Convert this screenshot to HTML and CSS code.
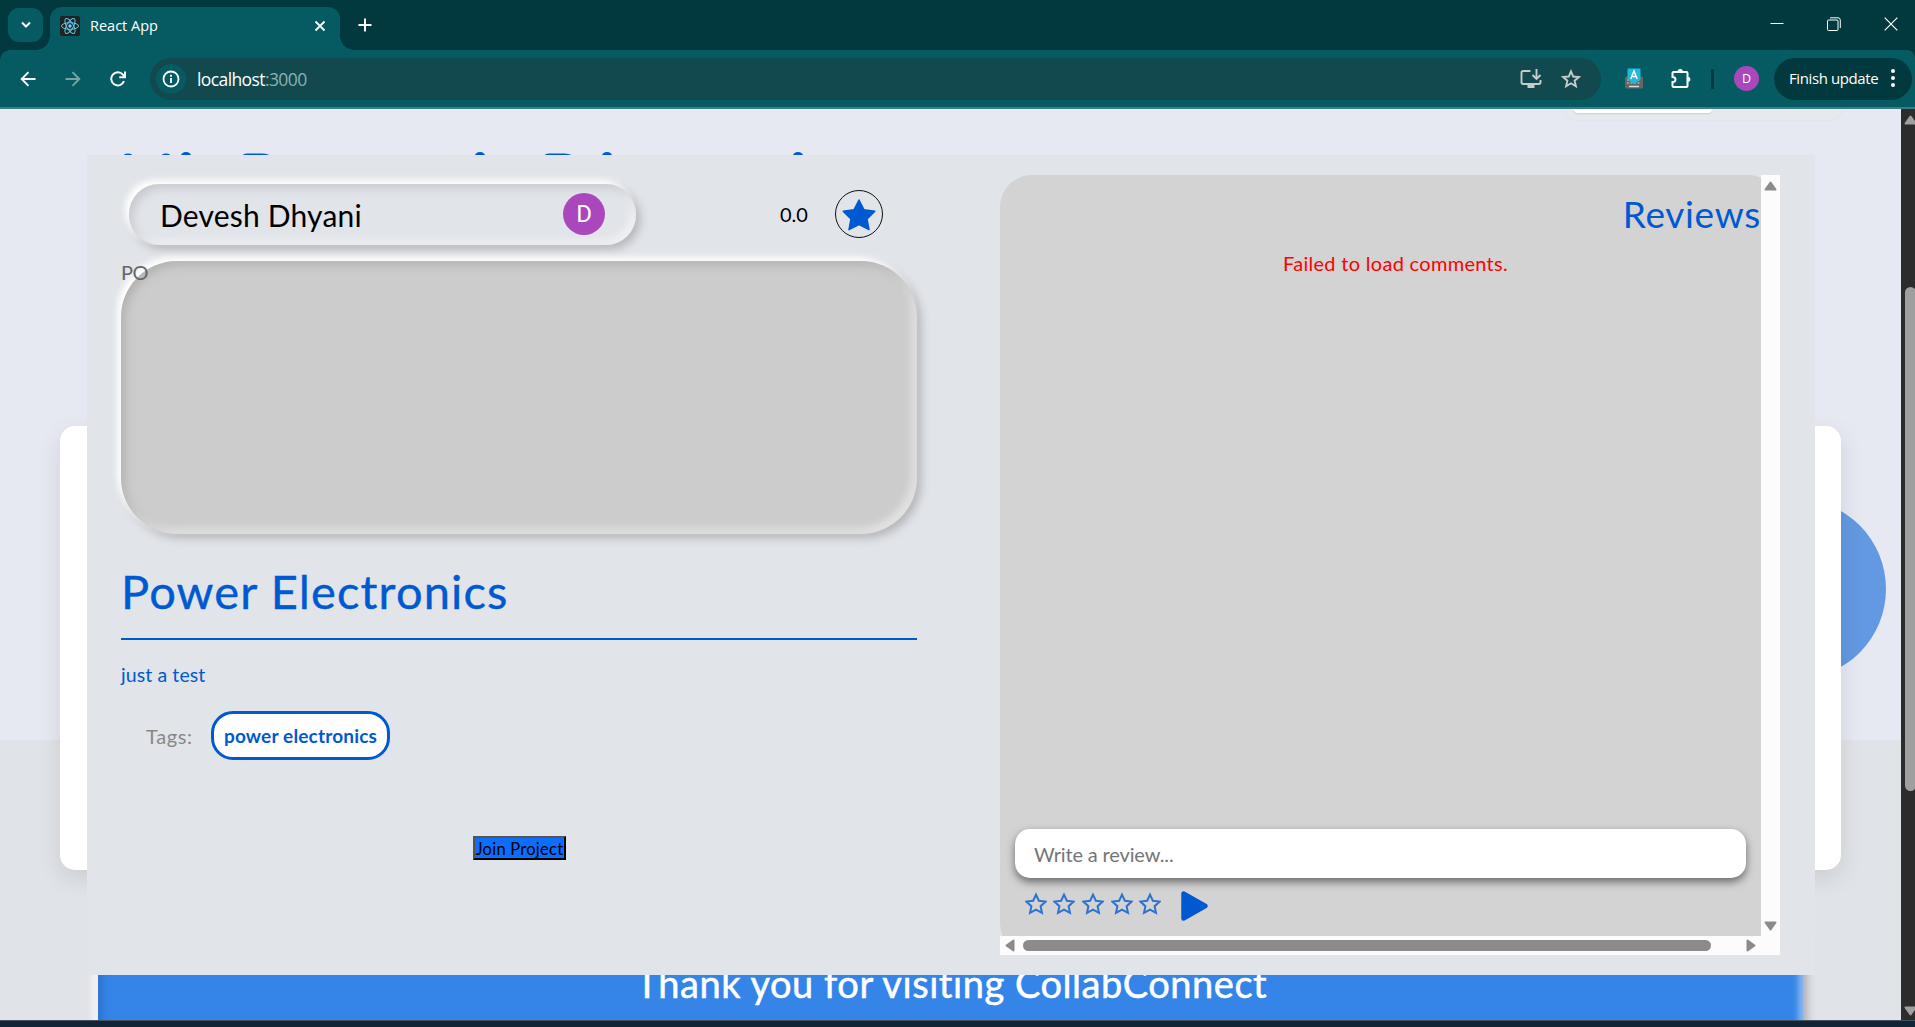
FILE: index.html
```html
<!DOCTYPE html>
<html lang="en">
<head>
<meta charset="utf-8">
<title>React App</title>
<link rel="stylesheet" href="styles.css">
</head>
<body>
<svg width="0" height="0" class="defs">
  <symbol id="star" viewBox="0 0 24 24"><path d="M12 1.800l3.100 6.700 7.300.9-5.400 5 1.500 7.300L12 18.100l-6.500 3.600L7 14.400l-5.400-5 7.300-.9z"/></symbol>
</svg>
<header class="tabstrip">
  <div class="tab-search"><svg width="12" height="8" viewBox="0 0 12 8"><path d="M2 1.500l4 4 4-4" fill="none" stroke="#fff" stroke-width="2"/></svg></div>
  <div class="tab">
    <svg class="favicon" width="20" height="20" viewBox="0 0 20 20"><rect width="20" height="20" rx="2" fill="#222"/><g fill="none" stroke="#61c9e8" stroke-width="1"><ellipse cx="10" cy="10" rx="8.500" ry="3.300"/><ellipse cx="10" cy="10" rx="8.500" ry="3.300" transform="rotate(60 10 10)"/><ellipse cx="10" cy="10" rx="8.500" ry="3.300" transform="rotate(120 10 10)"/></g><circle cx="10" cy="10" r="1.700" fill="#61dafb"/></svg>
    <span class="tab-title">React App</span>
    <svg width="12" height="12" viewBox="0 0 12 12"><path d="M1.500 1.500l9 9m0-9l-9 9" stroke="#fff" stroke-width="1.800"/></svg>
  </div>
  <svg class="new-tab" width="14" height="14" viewBox="0 0 14 14"><path d="M7 .5v13M.5 7h13" stroke="#fff" stroke-width="1.900"/></svg>
  <div class="window-buttons">
    <svg width="14" height="14" viewBox="0 0 14 14"><path d="M.5 6.500h13" stroke="#fff"/></svg>
    <svg width="14" height="14" viewBox="0 0 14 14" fill="none" stroke="#fff"><rect x=".5" y="3" width="10.500" height="10.500" rx="1"/><path d="M3 .8h8a2.300 2.300 0 0 1 2.300 2.300v8"/></svg>
    <svg width="14" height="14" viewBox="0 0 14 14"><path d="M.7.7l12.600 12.600m0-12.600L.7 13.300" stroke="#fff" stroke-width="1.200"/></svg>
  </div>
</header>
<nav class="toolbar">
  <svg class="nav-icon" width="16" height="16" viewBox="0 0 16 16" fill="none" stroke="#fff" stroke-width="1.900"><path d="M15.500 8H2M8.500 1.200L1.700 8l6.800 6.800"/></svg>
  <svg class="nav-icon dim" width="16" height="16" viewBox="0 0 16 16" fill="none" stroke="#fff" stroke-width="1.900"><path d="M.5 8H14M7.500 1.200L14.300 8l-6.800 6.800"/></svg>
  <svg class="nav-icon" width="16" height="16" viewBox="0 0 16 16" fill="none" stroke="#fff" stroke-width="2"><path d="M14 10.200A6.600 6.600 0 1 1 12.900 3.600L14.300 5.200"/><path d="M15 .5v5.700H9.300"/></svg>
  <div class="omnibox">
    <span class="site-info"><svg width="18" height="18" viewBox="0 0 18 18" fill="none" stroke="#fff" stroke-width="1.800"><circle cx="9" cy="9" r="7.500"/><path d="M9 8v5M9 4.800v1.900"/></svg></span>
    <span class="url">localhost<span class="port">:3000</span></span>
    <svg class="install" width="22" height="20" viewBox="0 0 22 20" fill="none" stroke="#c6cccd" stroke-width="1.900"><path d="M10.500 2H3.200Q1.500 2 1.500 3.700v9.600Q1.500 15 3.200 15h15.600q1.700 0 1.700-1.700V11"/><path d="M16.500 0v9.500M12.500 6l4 4 4-4"/><path d="M7.500 17.500h7" stroke-width="3"/></svg>
    <svg class="bookmark" width="20" height="20" viewBox="0 0 20 20"><path d="M10 2.300l2.200 5.200 5.700.5-4.300 3.700 1.300 5.600-4.900-3-4.900 3 1.300-5.600L2.100 8l5.700-.5z" fill="none" stroke="#c6cccd" stroke-width="1.900"/></svg>
  </div>
  <svg class="ext" width="20" height="21" viewBox="0 0 20 21"><rect x="1" y="8.500" width="18" height="12" rx="1" fill="#666"/><path d="M3 12h14M3 15h14" stroke="#aaa" stroke-width="1.600" stroke-dasharray="2 1.500"/><path d="M5 18.500h10" stroke="#ddd" stroke-width="1.400"/><path d="M3.500.5h13v11L10 16l-6.500-4.500z" fill="#1fb9dc"/><path d="M6.800 11L10 3l3.200 8M8 8.500h4" stroke="#fff" stroke-width="1.500" fill="none"/></svg>
  <svg class="puzzle" width="22" height="22" viewBox="0 0 22 22"><path d="M3.500 4h13q1 0 1 1v13q0 1-1 1h-13q-1 0-1-1v-4q3 0 3-2.500T2.500 9V5q0-1 1-1z" fill="none" stroke="#fff" stroke-width="2"/><path d="M7.500 4a2.700 3 0 0 1 5.400 0zM17.500 8.700a2.900 2.600 0 0 1 0 5.200z" fill="#fff"/></svg>
  <i class="divider"></i>
  <span class="profile">D</span>
  <div class="update"><span>Finish update</span><i class="dots"><b></b><b></b><b></b></i></div>
</nav>
<main class="viewport">
  <div class="scene">
    <div class="switch"><div class="switch-on"></div></div>
    <svg class="heading-tops" width="700" height="4" viewBox="0 0 700 4" fill="#0059d1"><ellipse cx="8" cy="4" rx="4.500" ry="2.500"/><ellipse cx="46" cy="4" rx="4.500" ry="2.500"/><ellipse cx="66" cy="5" rx="5.500" ry="5"/><path d="M122 4q1-2.500 5-2.500h15q6 0 9 2.500zM424 4q1-2.500 5-2.500h15q6 0 9 2.500z"/><ellipse cx="360" cy="5" rx="5.500" ry="5"/><ellipse cx="487" cy="5" rx="5.500" ry="5"/><ellipse cx="678" cy="5" rx="5.500" ry="5"/></svg>
    <div class="orb"></div>
    <section class="feature"></section>
    <footer class="thanks"><span>Thank you for visiting CollabConnect</span></footer>
  </div>
  <div class="modal">
    <section class="details">
      <div class="owner-row">
        <div class="owner"><span class="owner-name">Devesh Dhyani</span><span class="avatar">D</span></div>
        <span class="score">0.0</span>
        <span class="score-star"><svg width="36" height="34" viewBox="0 0 36 34"><path d="M18 3l5 9.800 10.800 1.400-7.800 7.700 2 10.700-10-5-10 5 2-10.700-7.800-7.700L13 12.800z" fill="#0059d1" stroke="#0059d1" stroke-width="1.500" stroke-linejoin="round"/></svg></span>
      </div>
      <div class="cover"><span>PO</span></div>
      <h1><span>Power Electronics</span></h1>
      <p class="summary">just a test</p>
      <div class="tags"><span class="tags-label">Tags:</span><span class="tag">power electronics</span></div>
      <button class="join">Join Project</button>
    </section>
    <section class="reviews">
      <div class="reviews-body">
        <h2>Reviews</h2>
        <p class="error"><span>Failed to load comments.</span></p>
        <div class="review-input"><span>Write a review...</span></div>
        <div class="rate">
          <svg><use href="#star"/></svg><svg><use href="#star"/></svg><svg><use href="#star"/></svg><svg><use href="#star"/></svg><svg><use href="#star"/></svg>
          <svg class="send" viewBox="0 0 27 30"><path d="M2.500 2.500v25L24.500 15z" fill="#0059d1" stroke="#0059d1" stroke-width="4.500" stroke-linejoin="round"/></svg>
        </div>
      </div>
      <div class="vbar"><svg width="13" height="10" viewBox="0 0 13 10"><path d="M6.500 1.500L11.500 8.500h-10z"/></svg><svg width="13" height="10" viewBox="0 0 13 10"><path d="M6.500 8.500L11.500 1.500h-10z"/></svg></div>
      <div class="hbar"><svg width="10" height="13" viewBox="0 0 10 13"><path d="M1.500 6.500L8.500 1.500v10z"/></svg><i></i><svg width="10" height="13" viewBox="0 0 10 13"><path d="M8.500 6.500L1.500 1.500v10z"/></svg></div>
    </section>
  </div>
  <aside class="page-scroll"><svg width="13" height="10" viewBox="0 0 13 10"><path d="M6.500 1.500L11.500 8.500h-10z"/></svg><i></i><svg width="13" height="10" viewBox="0 0 13 10"><path d="M6.500 8.500L11.500 1.500h-10z"/></svg></aside>
</main>
<div class="taskbar"></div>
</body>
</html>
```
FILE: styles.css
```css
* { box-sizing: border-box; }
html, body { height: 100%; }
body { margin: 0; display: flex; flex-direction: column; overflow: hidden; font-family: Lato, "Open Sans", sans-serif; background: #02393e; }
svg { display: block; flex: none; }
p, h1, h2 { margin: 0; font-weight: 400; }
.defs { position: absolute; }

.tabstrip { height: 50px; flex: none; display: flex; align-items: flex-start; background: #02393e; padding-left: 8px; font-family: "Open Sans", sans-serif; }
.tab-search { width: 35px; height: 34px; margin-top: 8px; border-radius: 11px; background: #055b61; display: grid; place-items: center; }
.tab { position: relative; width: 290px; height: 43px; margin: 7px 0 0 7px; padding: 0 14px 6px 10px; background: #055b61; border-radius: 12px 12px 0 0; display: flex; align-items: center; }
.tab::before, .tab::after { content: ""; position: absolute; bottom: 0; width: 14px; height: 14px; }
.tab::before { left: -14px; background: radial-gradient(circle at 0 0, transparent 13.500px, #055b61 14px); }
.tab::after { right: -14px; background: radial-gradient(circle at 100% 0, transparent 13.500px, #055b61 14px); }
.tab-title { margin-left: 10px; flex: 1; color: #fff; font-size: 14.500px; }
.new-tab { margin: 18px 0 0 18px; }
.window-buttons { margin: 17px 17px 0 auto; display: flex; gap: 43px; }

.toolbar { height: 59px; flex: none; display: flex; align-items: center; padding: 0 3px 0 20px; background: #055b61; border-bottom: 2px solid #3c7d83; font-family: "Open Sans", sans-serif; border-radius: 10px 8px 0 0; }
.nav-icon { margin-right: 29px; }
.dim { opacity: .45; }
.omnibox { width: 1451px; height: 42px; margin-left: -5px; border-radius: 21px; background: #11494f; display: flex; align-items: center; padding: 0 20px 0 6px; }
.site-info { width: 30px; height: 30px; border-radius: 50%; background: #055b61; display: grid; place-items: center; }
.url { margin-left: 11px; flex: 1; color: #fff; font-size: 17.500px; letter-spacing: -.6px; }
.port { color: #8fb0b3; }
.install { margin-right: 19px; }
.ext { margin-left: 23px; }
.puzzle { margin-left: 26px; }
.divider { width: 3px; height: 20px; margin-left: 19px; background: #02393e; border-radius: 1px; }
.profile { width: 25px; height: 25px; margin-left: 20px; border-radius: 50%; background: #ab47bc; color: #fff; font-size: 12.500px; display: grid; place-items: center; }
.update { width: 138px; height: 42px; margin-left: auto; border-radius: 21px; background: #02393e; color: #fff; font-size: 15px; letter-spacing: -.4px; display: flex; align-items: center; padding: 0 17px 1px 15px; justify-content: space-between; white-space: nowrap; }
.dots { display: flex; flex-direction: column; gap: 3px; }
.dots b { width: 4px; height: 4px; border-radius: 50%; background: #fff; }

.viewport { position: relative; height: 911px; flex: none; display: flex; overflow: hidden; }
.scene { position: relative; flex: 1; background: linear-gradient(#e6e9f2 631px, #e0e3e7 631px); overflow: hidden; display: flex; flex-direction: column; }
.switch { width: 276px; height: 11px; margin-left: 1565px; padding-left: 9px; background: #e7eaed; border-radius: 0 0 10px 10px; box-shadow: 0 0 2px #d6dade; flex: none; }
.switch-on { width: 138px; height: 4px; background: #fff; border-radius: 0 0 6px 6px; box-shadow: 0 1px 2px #ccc; }
.heading-tops { margin: 32px 0 0 120px; }
.orb { position: absolute; left: 1706px; top: 390px; width: 180px; height: 180px; border-radius: 50%; background: #6399e2; }
.feature { position: relative; width: 1781px; height: 444px; margin: 270px 0 0 60px; background: #fff; border-radius: 15px; box-shadow: 0 8px 24px rgba(0,0,0,.1); flex: none; }
.thanks { width: 1705px; height: 150px; margin: 60px 0 0 98px; padding: 23px 0 0 2px; background: #3585e9; flex: none; text-align: center; color: #fff; font-size: 38px; line-height: 60px; letter-spacing: .54px; -webkit-text-stroke: .5px #fff; white-space: nowrap; box-shadow: 4px 0 8px #aaaab4, -4px 0 8px #fff, inset 4px 0 8px rgba(30,80,150,.4), inset -4px 0 6px rgba(255,255,255,.5); }

.modal { position: absolute; left: 87px; top: 46px; width: 1728px; height: 820px; background: #e1e4e9; padding: 20px 35px 20px 34px; display: flex; gap: 83px; }
.details { width: 796px; padding-top: 9px; flex: none; display: flex; flex-direction: column; align-items: flex-start; }
.owner-row { display: flex; align-items: center; }
.owner { width: 507px; height: 61px; margin-left: 8px; padding: 0 31px 1px 31px; border-radius: 30px; display: flex; align-items: center; justify-content: space-between; box-shadow: -4px -4px 6px #fff, 4px 4px 10px #b4b4b9, inset 4px 4px 10px rgba(150,150,160,.35), inset -4px -4px 8px rgba(255,255,255,.6); }
.owner-name { padding-top: 2px; font-size: 30px; letter-spacing: .2px; white-space: nowrap; }
.avatar { width: 42px; height: 42px; border-radius: 50%; background: #ab47bc; color: #fff; font: 24px Roboto, sans-serif; display: grid; place-items: center; }
.score { width: 28px; margin-left: 144px; padding-bottom: 2px; font-size: 20px; }
.score-star { width: 48px; height: 48px; margin: 0 0 1px 27px; border: 1.500px solid #111; border-radius: 50%; display: grid; place-items: center; }
.cover { position: relative; width: 796px; height: 273px; margin-top: 16px; border-radius: 56px; background: #ccc; color: #666; font-size: 20px; line-height: 23px; letter-spacing: -.5px; box-shadow: -4px -4px 6px #fff, 4px 4px 10px #b4b4b9, inset 4px 4px 10px rgba(130,130,130,.35), inset -5px -5px 8px rgba(255,255,255,.5); }
h1 { width: 796px; margin-top: 27px; padding-bottom: 17px; border-bottom: 2px solid #0059d1; color: #0059d1; font-size: 47px; line-height: 60px; letter-spacing: 1.150px; -webkit-text-stroke: .4px #0059d1; }
.summary { margin-top: 23px; color: #0059d1; font-size: 19.500px; line-height: 24px; letter-spacing: .1px; }
.tags { display: flex; align-items: center; margin: 24px 0 0 25px; color: #888; font-size: 20px; }
.tags-label { width: 65px; padding-top: 1px; letter-spacing: .6px; }
.tag { width: 179px; height: 49px; border: 3px solid #0059d1; border-radius: 22px; background: #fff; color: #0059d1; font-size: 19px; font-weight: 700; letter-spacing: .18px; white-space: nowrap; display: grid; place-items: center; }
.join { margin: 76px 0 0 352px; width: 93px; height: 24px; padding: 1px 0 0; border: 2px outset #000; background: #0d6efd; color: #000; font-family: inherit; font-size: 16.500px; letter-spacing: .25px; line-height: 20px; white-space: nowrap; }

.reviews { width: 780px; height: 780px; flex: none; background: #d3d3d3; border-radius: 32px; display: grid; grid-template: 761px 19px / 761px 19px; }
.reviews-body { display: flex; flex-direction: column; padding: 15px 0 14px; }
h2 { color: #0059d1; font-size: 37px; line-height: 48px; letter-spacing: .7px; text-align: right; }
.error { margin-top: 13px; padding-left: 30px; text-align: center; color: #f00; font-size: 20px; letter-spacing: .3px; line-height: 24px; }
.review-input { width: 731px; height: 49px; margin: auto 0 11px 15px; padding: 0 0 0 19px; border-radius: 15px; background: #fff; color: #757575; font-size: 20px; letter-spacing: -.15px; display: flex; align-items: center; box-shadow: 0 4px 8px rgba(0,0,0,.5); }
.rate { height: 33px; flex: none; padding: 2px 0 0 24.500px; display: flex; gap: 6.700px; }
.rate svg { width: 22px; height: 26px; overflow: visible; fill: none; stroke: #2d72d2; stroke-width: 2.200; }
.rate .send { width: 27px; height: 30px; margin-left: 13px; }
.vbar { grid-row: 1 / 3; grid-column: 2; background: #fcfcfc; display: flex; flex-direction: column; align-items: center; justify-content: space-between; padding: 6px 0 24px; }
.hbar { background: #fcfcfc; display: flex; align-items: center; padding: 0 5px; }
.hbar i { width: 688px; height: 11px; border-radius: 6px; margin: 0 auto 0 8px; background: #8b8b8b; }
.vbar svg, .hbar svg { fill: #8b8b8b; stroke: #8b8b8b; stroke-width: 2; stroke-linejoin: round; }
.page-scroll { width: 14px; flex: none; background: #2c2c2c; padding: 6px 0 4px 3px; display: flex; flex-direction: column; overflow: hidden; }
.page-scroll i { width: 11px; height: 504px; margin: 162px 0 auto 1px; border-radius: 6px; background: #9f9f9f; flex: none; }
.page-scroll svg { fill: #9f9f9f; stroke: #9f9f9f; stroke-width: 2; stroke-linejoin: round; }
.taskbar { flex: 1; border-top: 1px solid #47535c; background: #122536; }
```
